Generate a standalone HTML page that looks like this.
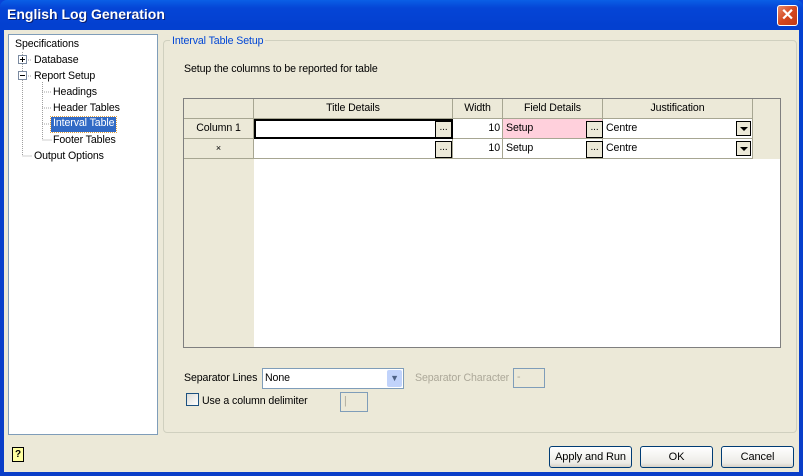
<!DOCTYPE html><html><head><style>
*{box-sizing:border-box}body{margin:0;width:803px;height:476px;overflow:hidden;font-family:Tahoma,"Liberation Sans",sans-serif;font-size:10.6px;letter-spacing:-0.1px;background:#0842d8}
.win{position:absolute;left:0;top:0;width:803px;height:476px;background:linear-gradient(#0a5fe6,#0545d6 8px,#0340d0 25px,#0a3ec8);border-radius:7px 7px 0 0}
.title{position:absolute;left:7px;top:6px;color:#fff;font-weight:bold;font-size:14px;letter-spacing:0;text-shadow:1px 1px #0a1e6e}
.close{position:absolute;left:777px;top:5px;width:21px;height:21px;border:1px solid #fff;border-radius:3px;background:linear-gradient(135deg,#e88a6a,#d4471f 50%,#c13a16);color:#fff;font-weight:bold;font-size:16px;text-align:center;line-height:19px}
.body{position:absolute;left:4px;top:30px;width:795px;height:442px;background:#ece9d8}
.a{position:absolute;white-space:nowrap}
.tree{position:absolute;left:8px;top:34px;width:150px;height:401px;background:#fff;border:1px solid #7f9db9}
.grp{position:absolute;left:163px;top:40px;width:634px;height:393px;border:1px solid #d0d0bf;border-radius:4px}
.c{position:absolute;border-right:1px solid #a7a692;border-bottom:1px solid #a7a692}
.h{background:#ece9d8;text-align:center;line-height:19px}
.w{background:#fff;line-height:19px}
.dots{position:absolute;width:17px;height:17px;border:1px solid #000;background:#ece9d8;text-align:center;line-height:12px;font-size:10px}
.btn{position:absolute;height:22px;border:1px solid #003c74;border-radius:3px;background:linear-gradient(#fff,#ecebe6 80%,#d6d0c5);text-align:center;line-height:20px;font-size:11px}
.dd{position:absolute;width:15px;height:15px;border:1px solid #000;background:#ece9d8}
.dd:after{content:"";position:absolute;left:3px;top:5px;border:4px solid transparent;border-top:4px solid #000;border-bottom:0}
</style></head><body><div class="win">
<div class="title">English Log Generation</div><div class="close">✕</div>
<div class="body"></div>
<div class="tree"></div>
<div class="a" style="left:15px;top:38px">Specifications</div>
<svg class="a" style="left:0;top:0" width="160" height="170"><g stroke="#a0a0a0" stroke-dasharray="1 1" fill="none"><path d="M22.5 52V156H32M26 60h6M26 76h6M42.5 82V140H52M42 92h10M42 108h10M42 124h10"/></g><rect x="18.5" y="55.5" width="8" height="8" fill="#fff" stroke="#7a8aa0"/><path d="M20 59.5h5M22.5 57v5" stroke="#000"/><rect x="18.5" y="71.5" width="8" height="8" fill="#fff" stroke="#7a8aa0"/><path d="M20 75.5h5" stroke="#000"/></svg>
<div class="a" style="left:34px;top:54px">Database</div>
<div class="a" style="left:34px;top:70px">Report Setup</div>
<div class="a" style="left:53px;top:86px">Headings</div>
<div class="a" style="left:53px;top:102px">Header Tables</div>
<div class="a" style="left:51px;top:117px;background:#316ac5;color:#fff;padding:0 2px;outline:1px dotted #e0a040;height:15px">Interval Table</div>
<div class="a" style="left:53px;top:134px">Footer Tables</div>
<div class="a" style="left:34px;top:150px">Output Options</div>
<div class="grp"></div>
<div class="a" style="left:170px;top:35px;background:#ece9d8;color:#0046d5;padding:0 2px">Interval Table Setup</div>
<div class="a" style="left:184px;top:63px">Setup the columns to be reported for table</div>
<div class="a" style="left:183px;top:98px;width:598px;height:250px;background:#fff;border:1px solid #7f7f7f"></div>
<div class="a" style="left:184px;top:99px;width:70px;height:248px;background:#ece9d8"></div>
<div class="a" style="left:254px;top:99px;width:526px;height:60px;background:#ece9d8"></div>
<div class="c h" style="left:184px;top:99px;width:70px;height:20px"></div>
<div class="c h" style="left:254px;top:99px;width:199px;height:20px">Title Details</div>
<div class="c h" style="left:453px;top:99px;width:50px;height:20px">Width</div>
<div class="c h" style="left:503px;top:99px;width:100px;height:20px">Field Details</div>
<div class="c h" style="left:603px;top:99px;width:150px;height:20px">Justification</div>
<div class="c h" style="left:184px;top:119px;width:70px;height:20px">Column 1</div>
<div class="c h" style="left:184px;top:139px;width:70px;height:20px;font-size:9px">×</div>
<div class="c w" style="left:254px;top:119px;width:199px;height:20px;border:2px solid #000"></div>
<div class="c w" style="left:254px;top:139px;width:199px;height:20px"></div>
<div class="dots" style="left:435px;top:121px">...</div><div class="dots" style="left:435px;top:141px">...</div>
<div class="c w" style="left:453px;top:119px;width:50px;height:20px;text-align:right;padding-right:2px">10</div>
<div class="c w" style="left:453px;top:139px;width:50px;height:20px;text-align:right;padding-right:2px">10</div>
<div class="c w" style="left:503px;top:119px;width:100px;height:20px;background:#ffd0dc;padding-left:3px">Setup</div>
<div class="c w" style="left:503px;top:139px;width:100px;height:20px;padding-left:3px">Setup</div>
<div class="dots" style="left:586px;top:121px">...</div><div class="dots" style="left:586px;top:141px">...</div>
<div class="c w" style="left:603px;top:119px;width:150px;height:20px;padding-left:3px">Centre</div>
<div class="c w" style="left:603px;top:139px;width:150px;height:20px;padding-left:3px">Centre</div>
<div class="dd" style="left:736px;top:121px"></div><div class="dd" style="left:736px;top:141px"></div>
<div class="a" style="left:184px;top:372px">Separator Lines</div>
<div class="a" style="left:262px;top:368px;width:142px;height:21px;border:1px solid #7f9db9;background:#fff;padding:3px 2px">None</div>
<div class="a" style="left:387px;top:370px;width:15px;height:17px;background:#c1d3fb;border-radius:2px;color:#4d6185;text-align:center;font-size:9px;line-height:17px">▼</div>
<div class="a" style="left:415px;top:372px;color:#aca899">Separator Character</div>
<div class="a" style="left:513px;top:368px;width:32px;height:20px;border:1px solid #7f9db9;color:#aca899;padding:2px 3px;background:#ece9d8">-</div>
<div class="a" style="left:186px;top:393px;width:13px;height:13px;border:1px solid #1c5180;background:linear-gradient(135deg,#dcdcd7,#fff)"></div>
<div class="a" style="left:202px;top:395px">Use a column delimiter</div>
<div class="a" style="left:340px;top:392px;width:28px;height:20px;border:1px solid #7f9db9;color:#aca899;padding:2px 3px">|</div>
<div class="a" style="left:12px;top:447px;width:12px;height:15px;border:1px solid #000;background:#ffffa0;font-size:10px;font-weight:bold;text-align:center;line-height:13px">?</div>
<div class="btn" style="left:549px;top:446px;width:83px">Apply and Run</div>
<div class="btn" style="left:640px;top:446px;width:73px">OK</div>
<div class="btn" style="left:721px;top:446px;width:73px">Cancel</div>
</div></body></html>
